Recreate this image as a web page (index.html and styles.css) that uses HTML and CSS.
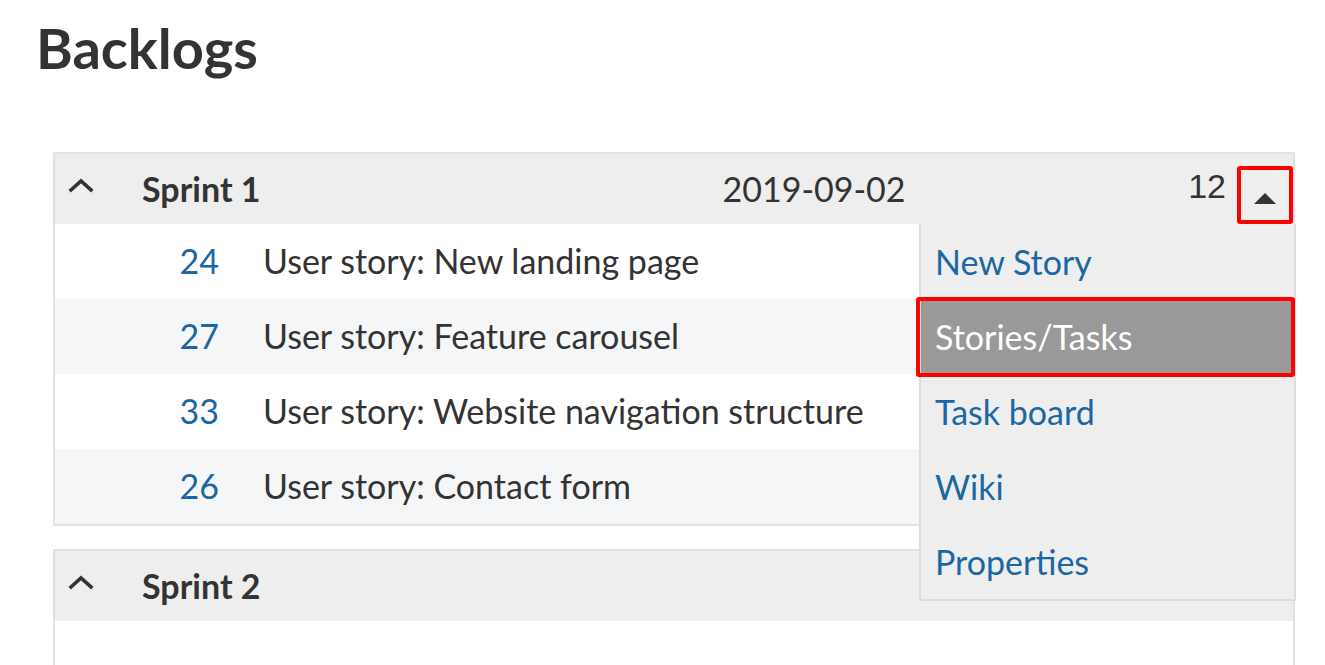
FILE: index.html
```html
<!DOCTYPE html>
<html>
<head>
<meta charset="utf-8">
<link rel="stylesheet" href="styles.css">
</head>
<body>
<h1 class="title">Backlogs</h1>
<div class="backlogs">
  <section class="sprint">
    <div class="sprint-header">
      <span class="chev"><svg width="26" height="16" viewBox="0 0 26 16"><path d="M3 13 L13 4 L23 13" fill="none" stroke="#333" stroke-width="3.6" stroke-linecap="square"/></svg></span>
      <span class="sprint-name">Sprint 1</span>
      <span class="sprint-date">2019-09-02</span>
      <span class="sprint-points">12</span>
      <span class="menu-toggle"><svg width="22" height="11" viewBox="0 0 22 11"><path d="M0 11 L11 0 L22 11 Z" fill="#333"/></svg></span>
      <ul class="menu">
        <li class="menu-item">New Story</li>
        <li class="menu-item active">Stories/Tasks</li>
        <li class="menu-item">Task board</li>
        <li class="menu-item">Wiki</li>
        <li class="menu-item">Properties</li>
      </ul>
    </div>
    <div class="story"><span class="story-id">24</span><span class="story-title">User story: New landing page</span></div>
    <div class="story alt"><span class="story-id">27</span><span class="story-title">User story: Feature carousel</span></div>
    <div class="story"><span class="story-id">33</span><span class="story-title">User story: Website navigation structure</span></div>
    <div class="story alt"><span class="story-id">26</span><span class="story-title">User story: Contact form</span></div>
  </section>
  <section class="sprint sprint-open">
    <div class="sprint-header">
      <span class="chev"><svg width="26" height="16" viewBox="0 0 26 16"><path d="M3 13 L13 4 L23 13" fill="none" stroke="#333" stroke-width="3.6" stroke-linecap="square"/></svg></span>
      <span class="sprint-name">Sprint 2</span>
    </div>
    <div class="sprint-body"></div>
  </section>
</div>
</body>
</html>
```

FILE: styles.css
```css
html, body {
  margin: 0;
  padding: 0;
  background: #fff;
  font-family: Lato, "Noto Sans", sans-serif;
  color: #333;
  overflow: hidden;
}

.title {
  margin: 0;
  padding: 13px 0 0 36px;
  font-size: 56px;
  font-weight: 700;
  line-height: 70px;
  color: #333;
}

.backlogs {
  padding: 69px 30px 0 53px;
}

.sprint {
  border: 2px solid #e2e2e2;
  margin-bottom: 23px;
}

.sprint-header {
  position: relative;
  display: flex;
  align-items: center;
  height: 70px;
  background: #eeeeee;
  font-size: 34px;
}

.chev {
  width: 26px;
  height: 16px;
  margin: 0 0 8px 13px;
  display: flex;
}

.sprint-name {
  margin-left: 48px;
  margin-bottom: 2px;
  font-weight: 700;
}

.sprint-date {
  margin-left: 462px;
  margin-bottom: 2px;
}

.sprint-points {
  margin-left: auto;
  margin-bottom: 5px;
  font-family: "Liberation Sans", Arial, sans-serif;
  font-size: 34px;
}

.menu-toggle {
  align-self: flex-start;
  display: flex;
  align-items: center;
  justify-content: center;
  box-sizing: border-box;
  width: 56px;
  height: 58px;
  margin: 12px 0 0 11px;
  border: 4px solid #ff0000;
  border-radius: 3px;
  padding-top: 6px;
}

.menu {
  position: absolute;
  top: 70px;
  right: -3px;
  width: 373px;
  margin: 0;
  padding: 0;
  list-style: none;
  background: #eeeeee;
  border: 2px solid #dcdcdc;
  border-top: none;
  z-index: 5;
}

.menu-item {
  position: relative;
  box-sizing: border-box;
  height: 75px;
  display: flex;
  align-items: center;
  padding-left: 14px;
  color: #1a67a3;
  font-size: 34px;
}

.menu-item.active {
  background: #999999;
  color: #fff;
}

.menu-item.active::after {
  content: "";
  position: absolute;
  top: -2px;
  bottom: -3px;
  left: -5px;
  right: -1px;
  border: 4px solid #ff0000;
  border-radius: 3px;
}

.story {
  display: flex;
  align-items: center;
  box-sizing: border-box;
  height: 75px;
  padding-bottom: 3px;
  font-size: 34px;
  background: #fff;
}

.story.alt {
  background: #f5f6f8;
}

.story-id {
  width: 164px;
  text-align: right;
  color: #1a67a3;
}

.story-title {
  margin-left: 44px;
}

.sprint-open {
  border-bottom: none;
}

.sprint-body {
  height: 80px;
  background: #fff;
}
```
